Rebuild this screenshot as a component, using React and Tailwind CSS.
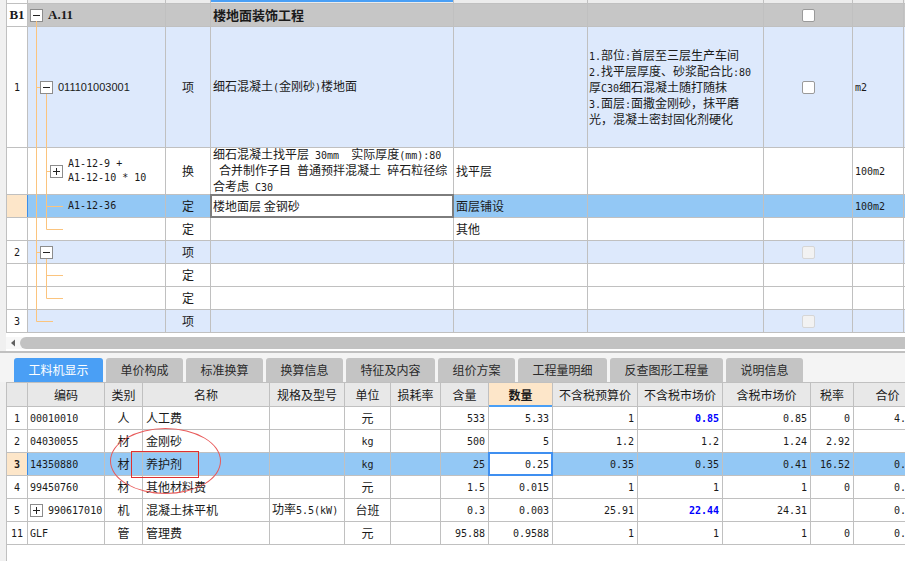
import React from "react";

const LC = "#fbc47e";

function T({ t, className = "" }) {
  const parts = String(t).split(/([\x20-\x7e]+)/).filter((p) => p !== "");
  return (
    <span className={"whitespace-pre " + className}>
      {parts.map((p, i) =>
        /^[\x20-\x7e]+$/.test(p) ? (
          <span key={i} className="font-['DejaVu_Sans_Mono',monospace] text-[10px]">
            {p}
          </span>
        ) : (
          <span key={i}>{p}</span>
        )
      )}
    </span>
  );
}

function Box({ plus }) {
  return (
    <svg width="13" height="13" className="shrink-0 block">
      <rect x="0.5" y="0.5" width="12" height="12" fill="#fff" stroke="#8c8c8c" />
      <path d="M3 6.5H10" stroke="#222" />
      {plus && <path d="M6.5 3V10" stroke="#222" />}
    </svg>
  );
}

function Check({ disabled }) {
  return disabled ? (
    <span className="block w-[13px] h-[13px] rounded-[2px] border border-[#d6d6d6] bg-[#f2f2f2]" />
  ) : (
    <span className="block w-[13px] h-[13px] rounded-[2px] border border-[#9a9a9a] bg-white" />
  );
}

function Tree({ h, d, pl, children }) {
  return (
    <>
      <svg
        className="absolute left-0 top-0 overflow-visible pointer-events-none"
        width="138"
        height={h}
      >
        <path d={d} stroke={LC} strokeWidth="1" fill="none" />
      </svg>
      <div className={"flex items-center gap-[5px] " + pl}>{children}</div>
    </>
  );
}

const cell = "shrink-0 h-full flex items-center border-r border-[#c0c0c0]";

function TopRow({ h, bg, num, sel, tree, type, name, edit, c5, c6, c7, c8 }) {
  return (
    <div className={"flex border-b border-[#c0c0c0] " + h + " " + bg}>
      {sel ? (
        <div className="shrink-0 h-full w-[21px] flex items-center justify-center bg-[#fde6c9] border-r border-[#3d8ee8]">
          {num}
        </div>
      ) : (
        <div className={cell + " w-[21px] justify-center bg-white"}>{num}</div>
      )}
      <div className={cell + " w-[138px] relative"}>{tree}</div>
      <div className={cell + " w-[45px] justify-center"}>{type}</div>
      <div className={cell + " w-[243px] pl-[2px] relative"}>
        {edit ? (
          <div className="absolute -left-px -top-px -right-px -bottom-px border-2 border-[#7d7d7d] bg-white flex items-center pl-[1px]">
            {name}
          </div>
        ) : (
          name
        )}
      </div>
      <div className={cell + " w-[134px] pl-[2px]"}>{c5}</div>
      <div className={cell + " w-[176px] pl-[1px]"}>{c6}</div>
      <div className={cell + " w-[89px] justify-center"}>{c7}</div>
      <div className={cell + " w-[51px] pl-[2px]"}>{c8}</div>
      <div className="flex-1 h-full" />
    </div>
  );
}

function TopGrid() {
  const mono = "font-['DejaVu_Sans_Mono',monospace] text-[10px]";
  return (
    <div className="border-l border-[#c0c0c0]">
      <div className="flex h-[4px] border-b border-[#c0c0c0] bg-[#ececec]">
        <div className={cell + " w-[21px] bg-white"} />
        <div className={cell + " w-[138px]"} />
        <div className={cell + " w-[45px]"} />
        <div className={cell + " w-[243px] items-start"}>
          <div className="w-full h-[2px] bg-[#4a9ff5]" />
        </div>
        <div className={cell + " w-[134px]"} />
        <div className={cell + " w-[176px]"} />
        <div className={cell + " w-[89px]"} />
        <div className={cell + " w-[51px]"} />
        <div className="flex-1" />
      </div>

      <TopRow
        h="h-[23px]"
        bg="bg-[#c6c6c6]"
        num={<span className="font-['Liberation_Serif',serif] font-bold text-[13px]">B1</span>}
        tree={
          <Tree h={22} d="M8.5 17V23" pl="pl-[2px]">
            <Box />
            <span className="font-['Liberation_Serif',serif] font-bold text-[13px]">A.11</span>
          </Tree>
        }
        name={<span className="font-bold text-[13px]">楼地面装饰工程</span>}
        c7={<Check />}
      />

      <TopRow
        h="h-[121px]"
        bg="bg-[#dde9fc]"
        num={<T t="1" />}
        tree={
          <Tree h={120} d="M8.5 0V121 M8.5 60.5H12 M18.5 67V121" pl="pl-[12px]">
            <Box />
            <span className="font-['Liberation_Sans',sans-serif] text-[11px]">011101003001</span>
          </Tree>
        }
        type="项"
        name={<T t="细石混凝土(金刚砂)楼地面" />}
        c6={
          <div className="flex flex-col">
            <T t="1.部位:首层至三层生产车间" />
            <T t="2.找平层厚度、砂浆配合比:80" />
            <T t="厚C30细石混凝土随打随抹" />
            <T t="3.面层:面撒金刚砂，抹平磨" />
            <T t="光，混凝土密封固化剂硬化" />
          </div>
        }
        c7={<Check />}
        c8={<T t="m2" />}
      />

      <TopRow
        h="h-[47px]"
        bg="bg-white"
        tree={
          <Tree h={46} d="M8.5 0V47 M18.5 0V47 M18.5 23.5H22" pl="pl-[22px]">
            <Box plus />
            <div className={"flex flex-col whitespace-pre " + mono}>
              <span>A1-12-9 +</span>
              <span>A1-12-10 * 10</span>
            </div>
          </Tree>
        }
        type="换"
        name={
          <div className="flex flex-col">
            <T t="细石混凝土找平层 30mm  实际厚度(mm):80" />
            <T t=" 合并制作子目 普通预拌混凝土 碎石粒径综" />
            <T t="合考虑 C30" />
          </div>
        }
        c5="找平层"
        c8={<T t="100m2" />}
      />

      <TopRow
        h="h-[23px]"
        bg="bg-[#93c8f5]"
        sel
        tree={
          <Tree h={22} d="M8.5 0V23 M18.5 0V23 M18.5 11.5H35" pl="pl-[40px]">
            <span className={mono}>A1-12-36</span>
          </Tree>
        }
        type="定"
        edit
        name="楼地面层 金钢砂"
        c5="面层铺设"
        c8={<T t="100m2" />}
      />

      <TopRow
        h="h-[23px]"
        bg="bg-white"
        tree={<Tree h={22} d="M8.5 0V23 M18.5 0V11.5 M18.5 11.5H35" pl="" />}
        type="定"
        c5="其他"
      />

      <TopRow
        h="h-[23px]"
        bg="bg-[#dde9fc]"
        num={<T t="2" />}
        tree={
          <Tree h={22} d="M8.5 0V23 M8.5 11.5H12 M18.5 18V23" pl="pl-[12px]">
            <Box />
          </Tree>
        }
        type="项"
        c7={<Check disabled />}
      />

      <TopRow
        h="h-[23px]"
        bg="bg-white"
        tree={<Tree h={22} d="M8.5 0V23 M18.5 0V23 M18.5 11.5H35" pl="" />}
        type="定"
      />

      <TopRow
        h="h-[23px]"
        bg="bg-white"
        tree={<Tree h={22} d="M8.5 0V23 M18.5 0V11.5 M18.5 11.5H35" pl="" />}
        type="定"
      />

      <TopRow
        h="h-[23px]"
        bg="bg-[#dde9fc]"
        num={<T t="3" />}
        tree={<Tree h={22} d="M8.5 0V11.5 M8.5 11.5H25" pl="" />}
        type="项"
        c7={<Check disabled />}
      />
    </div>
  );
}

function Tabs() {
  const tabs = [
    ["工料机显示", "w-[89px]"],
    ["单价构成", "w-[77px]"],
    ["标准换算", "w-[77px]"],
    ["换算信息", "w-[77px]"],
    ["特征及内容", "w-[89px]"],
    ["组价方案", "w-[77px]"],
    ["工程量明细", "w-[89px]"],
    ["反查图形工程量", "w-[113px]"],
    ["说明信息", "w-[77px]"],
  ];
  return (
    <div className="shrink-0 bg-[#f4f4f4] pt-[5px] pl-[14px] flex gap-[3px]">
      {tabs.map(([label, w], i) => (
        <div
          key={label}
          className={
            "h-[24px] rounded-t-[3px] flex items-center justify-center text-[12px] " +
            w +
            (i === 0 ? " bg-[#4a9ff5] text-white" : " bg-[#c4c4c4] text-[#2a2a2a]")
          }
        >
          {label}
        </div>
      ))}
    </div>
  );
}

const BW = [
  "w-[21px]",
  "w-[77px]",
  "w-[38px]",
  "w-[127px]",
  "w-[75px]",
  "w-[46px]",
  "w-[50px]",
  "w-[48px]",
  "w-[64px]",
  "w-[85px]",
  "w-[85px]",
  "w-[88px]",
  "w-[43px]",
  "w-[68px]",
];
const BA = [
  "justify-center",
  "justify-start pl-[2px]",
  "justify-center",
  "justify-start pl-[3px]",
  "justify-start pl-[2px]",
  "justify-center",
  "justify-center",
  "justify-end pr-[3px]",
  "justify-end pr-[3px]",
  "justify-end pr-[3px]",
  "justify-end pr-[3px]",
  "justify-end pr-[3px]",
  "justify-end pr-[3px]",
  "justify-end pr-[3px]",
];

const HEAD = ["", "编码", "类别", "名称", "规格及型号", "单位", "损耗率", "含量", "数量", "不含税预算价", "不含税市场价", "含税市场价", "税率", "合价"];

const ROWS = [
  ["1", "00010010", "人", "人工费", "", "元", "", "533", "5.33", "1", "*0.85", "0.85", "0", "4.53"],
  ["2", "04030055", "材", "金刚砂", "", "kg", "", "500", "5", "1.2", "1.2", "1.24", "2.92", "6"],
  ["3", "14350880", "材", "养护剂", "", "kg", "", "25", "0.25", "0.35", "0.35", "0.41", "16.52", "0.09"],
  ["4", "99450760", "材", "其他材料费", "", "元", "", "1.5", "0.015", "1", "1", "1", "0", "0.02"],
  ["5", "+990617010", "机", "混凝土抹平机", "功率5.5(kW)", "台班", "", "0.3", "0.003", "25.91", "*22.44", "24.31", "", "0.07"],
  ["11", "GLF", "管", "管理费", "", "元", "", "95.88", "0.9588", "1", "1", "1", "0", "0.96"],
];

function BottomGrid() {
  return (
    <div className="ml-[6px] flex-1 border-l border-t border-[#c0c0c0] bg-white">
      <div className="flex h-[24px] border-b border-[#c0c0c0] bg-[#e8e8e8]">
        {HEAD.map((h, i) =>
          i === 8 ? (
            <div key={i} className={cell + " relative justify-center font-bold bg-[#fde6c9] " + BW[i]}>
              {h}
              <span className="absolute left-0 right-0 -bottom-px h-[2px] bg-[#4a9ff5]" />
            </div>
          ) : (
            <div key={i} className={cell + " justify-center " + BW[i]}>
              {h}
            </div>
          )
        )}
      </div>
      {ROWS.map((r, ri) => {
        const sel = ri === 2;
        return (
          <div key={ri} className={"flex h-[23px] border-b border-[#c0c0c0] " + (sel ? "bg-[#93c8f5]" : "bg-white")}>
            {r.map((v, i) => {
              if (i === 0) {
                return sel ? (
                  <div key={i} className="shrink-0 h-full w-[21px] flex items-center justify-center bg-[#fde6c9] border-r border-[#3d8ee8] font-bold">
                    <T t={v} />
                  </div>
                ) : (
                  <div key={i} className={cell + " justify-center bg-white " + BW[i]}>
                    <T t={v} />
                  </div>
                );
              }
              let content;
              if (i === 1 && v.startsWith("+")) {
                content = (
                  <div className="flex items-center gap-[5px]">
                    <Box plus />
                    <T t={v.slice(1)} />
                  </div>
                );
              } else if (v.startsWith("*")) {
                content = <T t={v.slice(1)} className="font-bold text-[#0000ff]" />;
              } else {
                content = <T t={v} />;
              }
              if (sel && i === 8) {
                return (
                  <div key={i} className={cell + " relative " + BW[i]}>
                    <div className="absolute -left-px -top-px -right-px -bottom-px border-2 border-[#3f8ff0] bg-white flex items-center justify-end pr-[2px]">
                      {content}
                    </div>
                  </div>
                );
              }
              return (
                <div key={i} className={cell + " " + BW[i] + " " + BA[i]}>
                  {content}
                </div>
              );
            })}
          </div>
        );
      })}
    </div>
  );
}

export default function App() {
  return (
    <div className="relative w-[905px] h-[561px] overflow-hidden bg-[#f0f0f0] flex flex-col font-['Noto_Sans_CJK_SC',sans-serif] text-[12px] leading-[14px] text-[#1a1a1a]">
      <div className="ml-[6px] shrink-0 bg-white">
        <TopGrid />
        <div className="h-[4px]" />
        <div className="h-[12px] flex items-center bg-[#f7f7f7]">
          <svg width="14" height="12" className="shrink-0 block">
            <path d="M5 6L9 2.5V9.5Z" fill="#606060" />
          </svg>
          <div className="flex-1 h-full bg-[#c2c2c2] rounded-l-[6px]" />
        </div>
        <div className="h-[2px]" />
      </div>
      <div className="h-[2px] shrink-0 bg-[#c0c0c0]" />
      <Tabs />
      <BottomGrid />
      <div className="absolute left-[110px] top-[428px] w-[111px] h-[66px] rounded-[50%] border border-[#e85a5a]" />
      <div className="absolute left-[131px] top-[451px] w-[68px] h-[27px] border border-[#e03030]" />
    </div>
  );
}
